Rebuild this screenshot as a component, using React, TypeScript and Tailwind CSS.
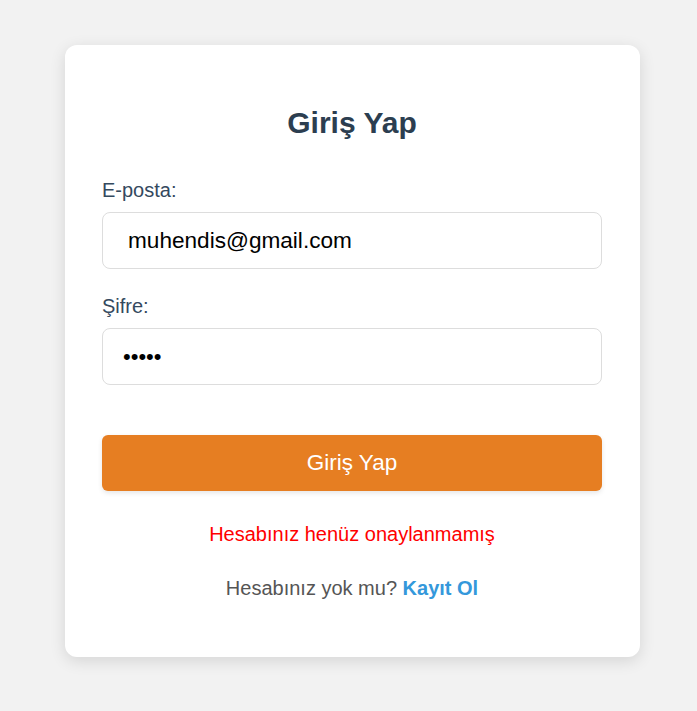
export default function App() {
  return (
    <div className="min-h-screen bg-[#f2f2f2] pt-[45px] font-['Liberation_Sans',Arial,sans-serif]">
      <div className="ml-[65px] w-[575px] rounded-[12px] bg-white pb-[57px] shadow-[0_4px_16px_rgba(0,0,0,0.12)]">
        <div className="ml-[37px] w-[500px] pt-[61px]">
          <h2 className="text-center text-[30px] font-bold leading-[34px] text-[#2c3e50]">Giriş Yap</h2>

          <form className="mt-[38px] flex flex-col" onSubmit={(e) => e.preventDefault()}>
            <label className="text-[20px] leading-[24px] text-[#34495e]">E-posta:</label>
            <input
              type="email"
              defaultValue="muhendis@gmail.com"
              className="mt-[10px] h-[57px] w-full rounded-[8px] border border-[#dddddd] bg-white pl-[25px] text-[22.6px] text-black outline-none"
            />

            <label className="mt-[25px] text-[20px] leading-[24px] text-[#34495e]">Şifre:</label>
            <input
              type="password"
              defaultValue="12345"
              className="mt-[10px] h-[57px] w-full rounded-[8px] border border-[#dddddd] bg-white pl-[20px] text-[22px] text-black outline-none"
            />

            <button
              type="submit"
              className="mt-[50px] h-[56px] w-full rounded-[6px] bg-[#e67e22] text-[22.5px] text-white shadow-[0_2px_5px_rgba(0,0,0,0.1)]">
              Giriş Yap
            </button>
          </form>

          <p className="mt-[31px] text-center text-[20px] leading-[24px] text-[#ff0000]">Hesabınız henüz onaylanmamış</p>

          <p className="mt-[30px] text-center text-[20px] leading-[24px] text-[#555555]">
            Hesabınız yok mu?{' '}
            <a href="#" className="font-bold text-[#3498db]">
              Kayıt Ol
            </a>
          </p>
        </div>
      </div>
    </div>
  )
}
